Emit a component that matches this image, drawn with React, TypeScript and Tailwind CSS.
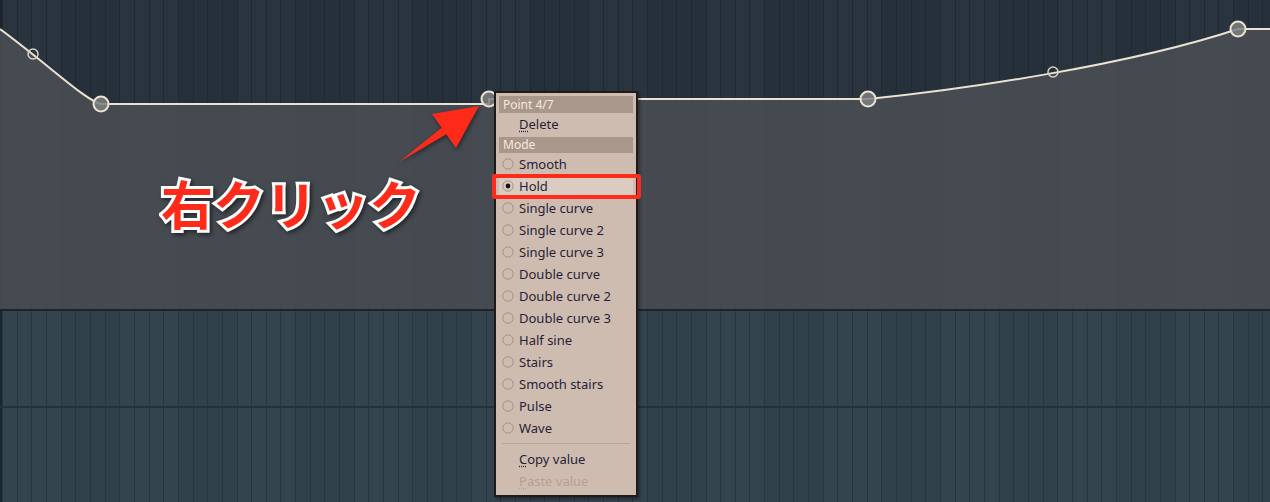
import React from "react";

const COLS = Array.from({ length: 87 }, (_, i) => i);

function TopColumns() {
  return (
    <div className="flex h-full">
      <div className="h-full w-[2px] shrink-0 bg-[#1c252d]" />
      {COLS.map((i) => (
        <div
          key={i}
          className={
            Math.floor(i / 4) % 2 === 0
              ? "h-full w-[14.67px] shrink-0 border-l border-[#202931] bg-[#29343e]"
              : "h-full w-[14.67px] shrink-0 border-l border-[#202931] bg-[#26303a]"
          }
        />
      ))}
    </div>
  );
}

function BottomColumns() {
  return (
    <div className="flex h-full">
      <div className="h-full w-[2px] shrink-0 bg-[#1c262e]" />
      {COLS.map((i) => (
        <div
          key={i}
          className={
            Math.floor(i / 4) % 2 === 0
              ? "h-full w-[14.67px] shrink-0 border-l border-[#28343e] bg-[#34444f]"
              : "h-full w-[14.67px] shrink-0 border-l border-[#28343e] bg-[#31414c]"
          }
        />
      ))}
    </div>
  );
}

function Envelope() {
  const curve =
    "M0,29 C50,66 85,100 101,104 L489,104 L489,99 L868,99 C960,90 1130,65 1238,29 L1270,29";
  return (
    <svg
      className="absolute inset-0"
      width={1270}
      height={309}
      viewBox="0 0 1270 309"
    >
      <path d={curve + " L1270,309 L0,309 Z"} fill="#4c5155" fillOpacity={0.82} />
      <path d={curve} fill="none" stroke="#ebe2d2" strokeWidth={2} />
      {[
        [101, 104],
        [489, 99],
        [868, 99],
        [1238, 29],
      ].map(([x, y]) => (
        <circle
          key={x}
          cx={x}
          cy={y}
          r={7.5}
          fill="#7d8081"
          fillOpacity={0.85}
          stroke="#ebe2d2"
          strokeWidth={2}
        />
      ))}
      {[
        [33, 54],
        [1053, 72],
      ].map(([x, y]) => (
        <circle
          key={x}
          cx={x}
          cy={y}
          r={5}
          fill="none"
          stroke="#d9d1c4"
          strokeWidth={1.5}
        />
      ))}
    </svg>
  );
}

const MODES = [
  "Smooth",
  "Hold",
  "Single curve",
  "Single curve 2",
  "Single curve 3",
  "Double curve",
  "Double curve 2",
  "Double curve 3",
  "Half sine",
  "Stairs",
  "Smooth stairs",
  "Pulse",
  "Wave",
];

function Radio({ on }: { on: boolean }) {
  return (
    <svg width={12} height={12} viewBox="0 0 12 12" className="shrink-0">
      <circle cx={6} cy={6} r={5.2} fill="none" stroke="#a3938a" strokeWidth={1} />
      {on && <circle cx={6} cy={6} r={2.4} fill="#141414" />}
    </svg>
  );
}

function Menu() {
  return (
    <div className="absolute left-[494px] top-[91px] flex h-[406px] w-[144px] flex-col border-2 border-[#1e1b1a] bg-[#cfbcb0] p-[3px] font-['Noto_Sans',sans-serif] shadow-[2px_2px_3px_rgba(0,0,0,0.35)]">
      <div className="flex h-[17px] items-center bg-[#aa978b] pl-[4px] text-[12px] leading-none text-[#f3e9e2]">
        Point 4/7
      </div>
      <div className="flex h-[22px] items-center pl-[20px] text-[13px] leading-none text-[#251f38]">
        <span className="underline decoration-dotted underline-offset-2">D</span>elete
      </div>
      <div className="mt-[2px] flex h-[16px] items-center bg-[#aa978b] pl-[4px] text-[12px] leading-none text-[#f3e9e2]">
        Mode
      </div>
      {MODES.map((m) => (
        <div
          key={m}
          className={
            m === "Hold"
              ? "flex h-[22px] items-center gap-[5px] bg-[#dccbc0] pl-[3px] text-[13px] leading-none text-[#251f38]"
              : "flex h-[22px] items-center gap-[5px] pl-[3px] text-[13px] leading-none text-[#251f38]"
          }
        >
          <Radio on={m === "Hold"} />
          <span>{m}</span>
        </div>
      ))}
      <div className="flex h-[9px] items-center px-[3px]">
        <div className="h-px w-full bg-[#b8a69b]" />
      </div>
      <div className="flex h-[22px] items-center pl-[20px] text-[13px] leading-none text-[#251f38]">
        <span className="underline decoration-dotted underline-offset-2">C</span>opy value
      </div>
      <div className="flex h-[22px] items-center pl-[20px] text-[13px] leading-none text-[#b3a196]">
        <span className="underline decoration-dotted underline-offset-2">P</span>aste value
      </div>
    </div>
  );
}

function Arrow() {
  return (
    <svg
      className="absolute left-0 top-0 drop-shadow-[1px_2px_2px_rgba(0,0,0,0.45)]"
      width={500}
      height={200}
      viewBox="0 0 500 200"
    >
      <polygon
        points="399,162 441.7,127.7 432,114 479,106 456,148 446.3,134.3"
        fill="#ff2b1a"
      />
    </svg>
  );
}

export default function App() {
  return (
    <div className="relative h-[502px] w-[1270px] overflow-hidden bg-[#1c252d]">
      <div className="flex h-full flex-col">
        <div className="relative h-[309px] shrink-0">
          <TopColumns />
          <Envelope />
        </div>
        <div className="h-[2px] shrink-0 bg-[#1b242c]" />
        <div className="relative h-[191px] shrink-0">
          <BottomColumns />
          <div className="absolute left-0 right-0 top-[95px] h-[2px] bg-[#24303a]" />
        </div>
      </div>

      <Arrow />

      <div className="absolute left-[161px] top-[177px] whitespace-nowrap font-['Noto_Sans_CJK_JP',sans-serif] text-[52px] font-bold leading-none text-[#ff2b1a] [-webkit-text-stroke:6px_#ffffff] [paint-order:stroke_fill] drop-shadow-[2px_2px_2px_rgba(0,0,0,0.5)]">
        右クリック
      </div>

      <Menu />

      <div className="absolute left-[492px] top-[174px] h-[25px] w-[149px] rounded-[3px] border-4 border-[#ff2b1a]" />
    </div>
  );
}
